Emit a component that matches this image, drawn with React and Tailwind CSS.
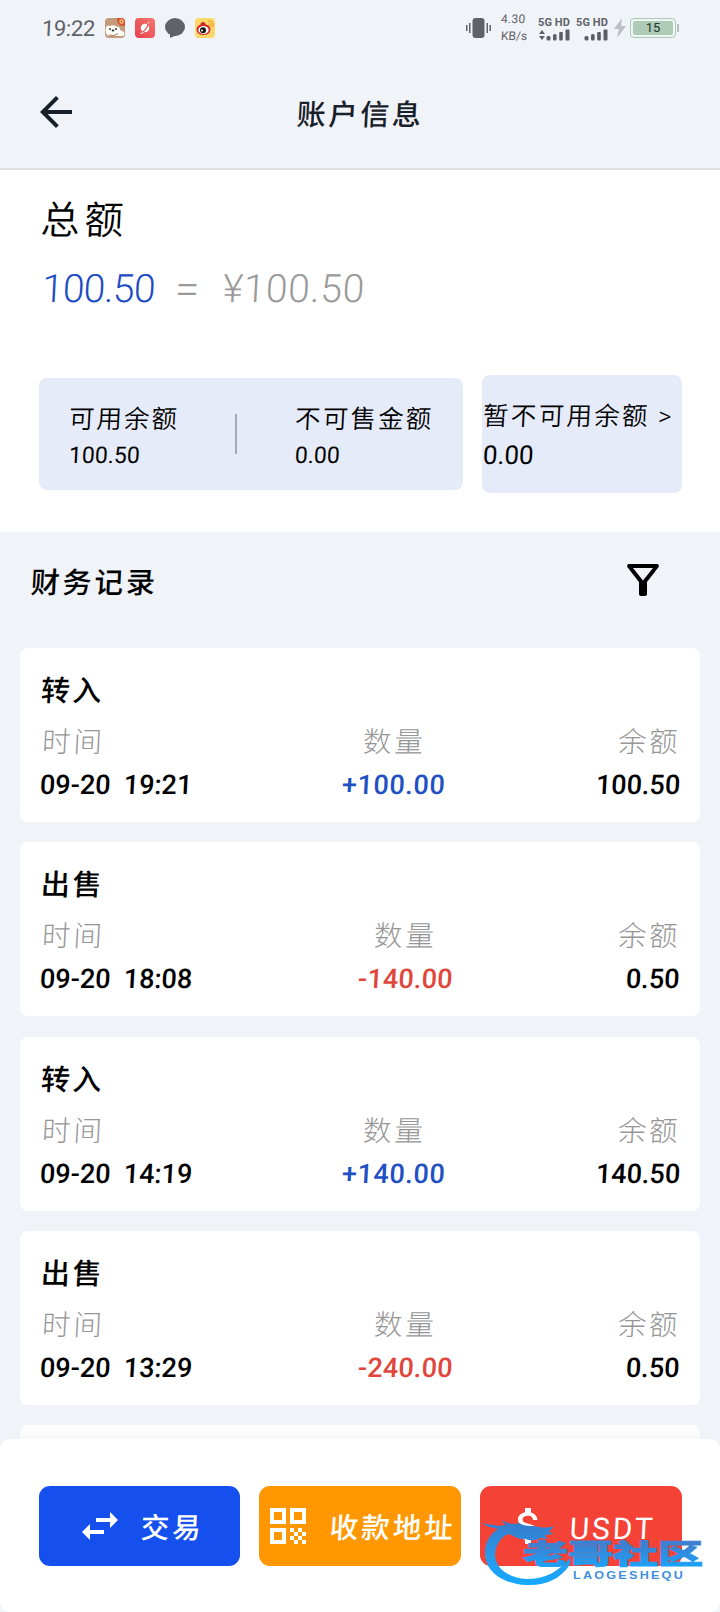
import {
  MdArrowBack,
  MdAttachMoney,
  MdOutlineFilterAlt,
  MdQrCode,
  MdSwapHoriz,
} from "react-icons/md";

const records = [
  { type: "转入", time: "09-20 19:21", amount: "+100.00", balance: "100.50" },
  { type: "出售", time: "09-20 18:08", amount: "-140.00", balance: "0.50" },
  { type: "转入", time: "09-20 14:19", amount: "+140.00", balance: "140.50" },
  { type: "出售", time: "09-20 13:29", amount: "-240.00", balance: "0.50" },
];

function Text({ className = "", children }) {
  return (
    <span className={`block whitespace-pre -skew-x-3 ${className}`}>
      {children}
    </span>
  );
}

function AppIcons() {
  return (
    <svg width="111" height="22" viewBox="0 0 111 22">
      {/* bear */}
      <rect x="0" y="1" width="20" height="20" rx="4" fill="#c39a7c" />
      <path
        d="M1 11c0-2 2-3 4-2 2-1 5-1 7 1 2-1 3 1 3 3l4 2c1 2 0 4-2 4H5c-4 0-5-4-4-8z"
        fill="#fffdf8"
      />
      <circle cx="5" cy="12" r="0.9" fill="#222" />
      <circle cx="11" cy="12" r="0.9" fill="#222" />
      <ellipse cx="8" cy="13.500" rx="1.400" ry="1" fill="#333" />
      <path d="M4 18q5 2 9-1.500" stroke="#a8755c" fill="none" />
      <path d="M12 1h4q4 0 4 4v4q-8 1-8-8z" fill="#d9502c" />
      <circle cx="16.500" cy="4.500" r="2.200" fill="#ffd28a" />
      <circle cx="16.500" cy="4.500" r="0.900" fill="#b53a1e" />
      {/* red planet */}
      <defs>
        <linearGradient id="planet" x1="1" y1="0" x2="0" y2="1">
          <stop offset="0" stopColor="#f4776f" />
          <stop offset="1" stopColor="#e8404f" />
        </linearGradient>
      </defs>
      <rect x="30" y="1" width="20" height="20" rx="4" fill="url(#planet)" />
      <circle cx="40" cy="11" r="4.300" fill="#fff" />
      <path d="M36.500 16q5-3 7-10" stroke="#ec5b5d" strokeWidth="1.200" fill="none" />
      <path d="M35.500 16.500l3-1M42.500 6.500l2-1.500" stroke="#fff" />
      {/* chat */}
      <ellipse cx="70" cy="10" rx="10" ry="9" fill="#5f6267" />
      <path d="M65 16v5l7-3z" fill="#5f6267" />
      {/* weibo */}
      <rect x="90" y="1" width="20" height="20" rx="4" fill="#fbd868" />
      <ellipse cx="98.500" cy="12.500" rx="7" ry="5.500" fill="#d3252b" />
      <circle cx="98" cy="7.500" r="2.500" fill="#d3252b" />
      <ellipse cx="98.500" cy="13" rx="5.200" ry="4" fill="#fff" />
      <circle cx="98" cy="13.200" r="3" fill="#111" />
      <circle cx="97" cy="13.500" r="1" fill="#fff" />
      <path
        d="M103 4q6 0 5 6M103.500 7q3 0 2.500 3"
        stroke="#f0aa3a"
        strokeWidth="1.500"
        fill="none"
      />
    </svg>
  );
}

function SignalBars({ arrows }) {
  return (
    <svg width="32" height="12" viewBox="0 0 32 12" fill="#5b5e63">
      {arrows && <path d="M1 5l3-4 3 4zM1 7l3 4 3-4z" />}
      <rect x="8.500" y="7" width="4" height="4.500" rx="1.500" />
      <rect x="15" y="5" width="3.600" height="6.500" rx="1.500" />
      <rect x="21.200" y="3" width="3.600" height="8.500" rx="1" />
      <rect x="27.500" y="0.500" width="4" height="11" rx="1" />
    </svg>
  );
}

function StatusBar() {
  return (
    <div className="flex h-14 items-center pl-[42px] pr-[41px] text-[#5f6267]">
      <Text className="w-[63px] pt-px text-[22px] leading-6 tracking-[-0.4px]">19:22</Text>
      <AppIcons />
      <div className="ml-auto flex items-center">
        <svg width="25" height="20" viewBox="0 0 25 20" fill="#5f6267">
          <rect x="6.500" width="12" height="20" rx="3" />
          <rect x="0" y="7" width="1.500" height="6" />
          <rect x="3" y="5" width="1.500" height="10" />
          <rect x="20.500" y="5" width="1.500" height="10" />
          <rect x="23.500" y="7" width="1.500" height="6" />
        </svg>
        <div className="ml-[10px] w-[37px] text-[12px] leading-[17px]">
          <Text className="tracking-[0.3px]">4.30</Text>
          <Text>KB/s</Text>
        </div>
        <div className="w-[38px]">
          <p className="whitespace-nowrap text-[11px] font-bold leading-[13px] tracking-[0.1px]">
            5G HD
          </p>
          <SignalBars arrows />
        </div>
        <div className="w-[38px]">
          <p className="whitespace-nowrap text-[11px] font-bold leading-[13px] tracking-[0.1px]">
            5G HD
          </p>
          <SignalBars />
        </div>
        <svg width="12" height="20" viewBox="0 0 12 20" fill="#bbbec3">
          <path d="M8 0L0 11h5l-2 9 9-12H7z" />
        </svg>
        <div className="ml-[4px] h-[20px] w-[46px] rounded-[4px] border border-[#a9ccb5] p-[2px]">
          <div className="rounded-[2px] bg-[#adcbb5] text-center text-[13px] leading-[14px] text-[#26352b]">
            15
          </div>
        </div>
        <span className="ml-px h-[8px] w-[2px] bg-[#b9bcc1]" />
      </div>
    </div>
  );
}

function RecordCard({ record }) {
  const incoming = record.amount.startsWith("+");
  return (
    <div className="mb-[20.3px] h-[174px] shrink-0 rounded-lg bg-white px-[20px] pt-[23px]">
      <Text className="pl-px text-[29px] font-medium leading-10 tracking-[2.500px]">
        {record.type}
      </Text>
      <div className="mt-[11px] flex justify-between text-[27px] font-medium leading-[42px]">
        <div>
          <Text className="pl-[2px] text-[28.500px] font-light tracking-[3px] text-[#969696]">
            时间
          </Text>
          <Text className="[word-spacing:6.500px]">{record.time}</Text>
        </div>
        <div className="flex flex-col items-center">
          <Text className="pl-px text-[28.500px] font-light tracking-[3px] text-[#969696]">
            数量
          </Text>
          <Text
            className={
              incoming
                ? "tracking-[0.6px] text-[#2050c4]"
                : "tracking-[0.2px] text-[#e0463c]"
            }
          >
            {record.amount}
          </Text>
        </div>
        <div className="flex flex-col items-end">
          <Text className="text-[28.500px] font-light tracking-[2.500px] text-[#969696]">
            余额
          </Text>
          <Text>{record.balance}</Text>
        </div>
      </div>
    </div>
  );
}

function Watermark() {
  return (
    <svg
      className="absolute left-[480px] top-[74px]"
      width="230"
      height="76"
      viewBox="0 0 230 76"
    >
      <defs>
        <linearGradient id="dragon" x1="0" y1="0" x2="0" y2="1">
          <stop offset="0" stopColor="#3779c9" />
          <stop offset="0.500" stopColor="#2b96e8" />
          <stop offset="1" stopColor="#16aaff" />
        </linearGradient>
        <linearGradient id="letters" x1="0" y1="0" x2="0" y2="1">
          <stop offset="0.200" stopColor="#3d80d0" />
          <stop offset="0.900" stopColor="#19a4fb" />
        </linearGradient>
      </defs>
      {/* dragon head and tail */}
      <path
        d="M2 10c6 2 11 1 16 3 3 0 5-1 8-1-2-1-3-3-4-5 4 3 8 4 13 4l4-1c5 3 10 3 15 3 6 1 11 3 20 0l-5 6 5 2-9 1 2 4-7-1c-5 3-10 3-15 1-6 1-11-3-16-5-8 2-13 11-14 20 0 14 13 24 32 25 17 0 30-6 43-21 1 3 0 5-1 8-9 13-24 20-42 19C23 71 5 59 5 40c0-11 5-19 13-24-5-1-11-2-16-6z"
        fill="url(#dragon)"
      />
      <text
        x="43"
        y="51"
        fontSize="27"
        fontWeight="900"
        fill="url(#letters)"
        stroke="url(#letters)"
        strokeWidth="1"
        textLength="180"
        lengthAdjust="spacingAndGlyphs"
      >
        老哥社区
      </text>
      <text
        x="93"
        y="66"
        fontSize="10"
        className="[font-family:'Liberation_Sans',sans-serif]"
        fontWeight="700"
        fill="#3f8fdc"
        letterSpacing="1.800"
        textLength="112"
        lengthAdjust="spacingAndGlyphs"
      >
        LAOGESHEQU
      </text>
    </svg>
  );
}

export default function App() {
  return (
    <div className="flex h-[1612px] w-[720px] flex-col overflow-hidden bg-[#f0f3f8] text-black [font-family:Roboto,'Noto_Sans_CJK_SC',sans-serif]">
      <header className="h-[170px] shrink-0 border-b-2 border-[#dcdee3] text-[#18202a]">
        <StatusBar />
        <div className="grid h-[112px] grid-cols-[1fr_auto_1fr] items-center">
          <MdArrowBack size={48} className="ml-[32px]" />
          <Text className="pt-[6px] text-[29px] font-medium leading-10 tracking-[2.700px]">
            账户信息
          </Text>
        </div>
      </header>

      {/* Totals */}
      <section className="h-[362px] shrink-0 bg-white px-[38.500px] pt-[23px]">
        <Text className="pl-[2px] text-[39px] font-[350] leading-[56px] tracking-[4.500px]">
          总额
        </Text>
        <div className="mt-[12px] flex items-center pl-[3px] text-[39px] font-[350] leading-[56px]">
          <Text className="tracking-[-0.8px] text-[#1c4bc4]">100.50</Text>
          <Text className="ml-[21px] text-[44px] text-[#9a9a9a]">=</Text>
          <Text className="ml-[23px] tracking-[0.6px] text-[#9a9a9a]">¥100.50</Text>
        </div>
        <div className="mt-[58px] flex items-center justify-between">
          <div className="flex h-[112px] w-[424px] items-center rounded-lg bg-[#e6ebf9] pl-[30px]">
            <div className="w-[166px] pt-[6px]">
              <Text className="text-[25.500px] font-[350] leading-9 tracking-[2px]">可用余额</Text>
              <Text className="pt-px text-[23px] leading-9">100.50</Text>
            </div>
            <span className="h-10 w-[2px] bg-[#a9a9b0]" />
            <div className="ml-[58px] pt-[6px]">
              <Text className="text-[25.500px] font-[350] leading-9 tracking-[2.200px]">
                不可售金额
              </Text>
              <Text className="pt-px text-[23px] leading-9">0.00</Text>
            </div>
          </div>
          <div className="h-[118px] w-[200px] rounded-lg bg-[#e6ebf9] pl-px pt-[22px]">
            <Text className="text-[25.500px] font-[350] leading-[38px] tracking-[2.300px]">
              暂不可用余额 &gt;
            </Text>
            <Text className="text-[26px] leading-10">0.00</Text>
          </div>
        </div>
      </section>

      {/* Records */}
      <section className="flex h-[907px] shrink-0 flex-col overflow-hidden px-[20px]">
        <div className="flex h-[116px] shrink-0 items-start justify-between pl-[11px] pr-[33px] pt-[24px]">
          <Text className="pt-[7px] text-[29px] font-medium leading-10 tracking-[2.700px]">
            财务记录
          </Text>
          <MdOutlineFilterAlt size={48} />
        </div>
        {records.map((record) => (
          <RecordCard key={record.time} record={record} />
        ))}
        <div className="h-10 shrink-0 rounded-lg bg-linear-to-b from-white to-[#ececf0]" />
      </section>

      <footer className="relative h-[173px] shrink-0 rounded-[10px] bg-white px-[38.500px] pt-[47px]">
        <div className="flex justify-between text-[28.500px] font-medium text-white">
          <button className="flex h-[79.500px] w-[201.500px] items-center rounded-[11px] bg-[#154fee] pl-[37px]">
            <MdSwapHoriz size={48} />
            <Text className="ml-[17px] pt-[8px] tracking-[3px]">交易</Text>
          </button>
          <button className="flex h-[79.500px] w-[201.500px] items-center rounded-[11px] bg-[#ff9800] pl-[5px]">
            <MdQrCode size={48} className="shrink-0" />
            <Text className="ml-[18px] pt-[8px] tracking-[3px]">收款地址</Text>
          </button>
          <button className="flex h-[79.500px] w-[201.500px] items-center rounded-[11px] bg-[#f44336] pl-[25px]">
            <MdAttachMoney size={48} />
            <Text className="ml-[17px] pt-[6px] text-[30px] font-normal tracking-[2.800px]">
              USDT
            </Text>
          </button>
        </div>
        <Watermark />
      </footer>
    </div>
  );
}
